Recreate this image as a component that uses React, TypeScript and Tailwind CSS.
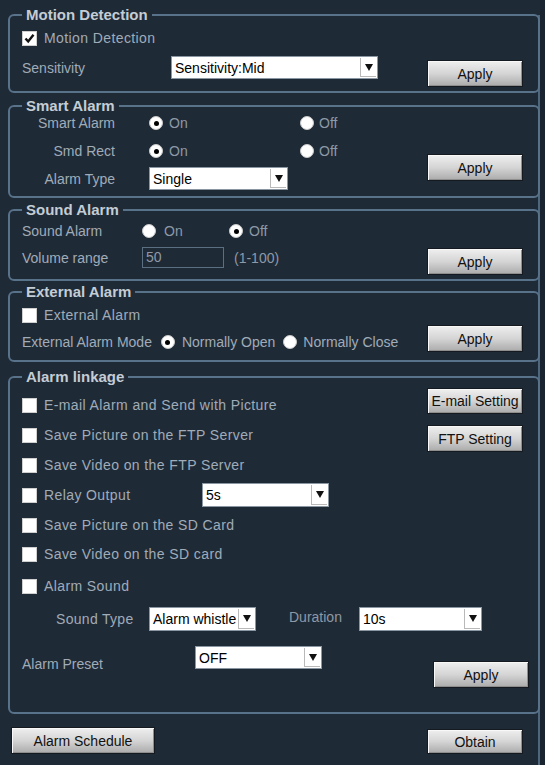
import type { ReactNode } from "react";

const label = "text-[14px] leading-[16px] text-[#a0acb8] whitespace-nowrap";
const dim = "text-[14px] leading-[16px] text-[#8d99a6] whitespace-nowrap";

function Legend({ children }: { children: ReactNode }) {
  return (
    <legend className="px-[4px] text-[15px] font-bold leading-[18px] text-[#c4ccd4]">
      {children}
    </legend>
  );
}

function Btn({ children, className = "" }: { children: ReactNode; className?: string }) {
  return (
    <button
      className={`flex shrink-0 items-center justify-center whitespace-nowrap border border-[#141a20] bg-linear-to-b from-[#efefef] via-[#d5d5d5] to-[#ababab] text-[14px] leading-[16px] text-[#111] shadow-[inset_1px_1px_0_#f8f8f8,inset_-1px_-1px_0_#8e8e8e] ${className}`}
    >
      {children}
    </button>
  );
}

function Check({ checked = false }: { checked?: boolean }) {
  return (
    <span className="flex h-[15px] w-[15px] shrink-0 items-center justify-center border border-[#cfcfcf] bg-white">
      {checked && (
        <svg width="11" height="11" viewBox="0 0 11 11">
          <path d="M1.5 5.5 L4.2 8.5 L9.5 1.8" fill="none" stroke="#111" strokeWidth="2.4" />
        </svg>
      )}
    </span>
  );
}

function Radio({ on = false }: { on?: boolean }) {
  return (
    <span className="flex h-[14px] w-[14px] shrink-0 items-center justify-center rounded-full border border-[#c9c9c9] bg-white">
      {on && <span className="h-[5px] w-[5px] rounded-full bg-black" />}
    </span>
  );
}

function Sel({ value, className = "" }: { value: string; className?: string }) {
  return (
    <div className={`flex shrink-0 items-stretch overflow-hidden border border-[#8a96a2] bg-white ${className}`}>
      <span className="flex min-w-0 flex-1 items-center overflow-hidden whitespace-nowrap pl-[3px] text-[14px] leading-[16px] text-black">
        {value}
      </span>
      <span className="my-[1px] mr-[1px] flex w-[16px] shrink-0 items-center justify-center border-b border-l border-[#b9b9b9] bg-white">
        <svg width="8" height="7" viewBox="0 0 8 7">
          <path d="M0 0 H8 L4 7 Z" fill="#111" />
        </svg>
      </span>
    </div>
  );
}

function CheckRow({ text, className = "", checked = false }: { text: string; className?: string; checked?: boolean }) {
  return (
    <div className={`flex h-[20px] items-center gap-[7px] ${className}`}>
      <Check checked={checked} />
      <span className={`${label} tracking-[0.4px]`}>{text}</span>
    </div>
  );
}

const fs = "ml-[8px] w-[532px] min-w-0 rounded-[6px] border-2 border-[#58728a] pl-[12px] pr-0 pb-0";

export default function App() {
  return (
    <div className="relative flex h-[765px] w-[545px] overflow-hidden bg-[#1f2a37] font-['Liberation_Sans',Arial,sans-serif]">
      <div className="absolute bottom-0 right-[5px] top-[15px] w-[2px] bg-[#4f677c]" />
      <div className="absolute bottom-0 right-0 top-0 w-[5px] bg-[#1a2430]" />
      <div className="relative flex w-[540px] flex-col">
        {/* Motion Detection */}
        <fieldset className={`${fs} mt-[6px] h-[87px]`}>
          <Legend>Motion Detection</Legend>
          <div className="flex">
            <div className="min-w-0 flex-1">
              <CheckRow text="Motion Detection" checked className="mt-[4px]" />
              <div className="mt-[8px] flex h-[23px] items-center">
                <span className={`${label} w-[149px]`}>Sensitivity</span>
                <Sel value="Sensitivity:Mid" className="h-[23px] w-[207px]" />
              </div>
            </div>
            <Btn className="mr-[15px] mt-[36px] h-[27px] w-[96px]">Apply</Btn>
          </div>
        </fieldset>

        {/* Smart Alarm */}
        <fieldset className={`${fs} mt-[4px] h-[101px]`}>
          <Legend>Smart Alarm</Legend>
          <div className="flex">
            <div className="min-w-0 flex-1">
              <div className="flex h-[16px] items-center">
                <span className={`${label} w-[93px] text-right`}>Smart Alarm</span>
                <div className="ml-[34px] flex w-[151px] items-center gap-[6px]">
                  <Radio on />
                  <span className={dim}>On</span>
                </div>
                <div className="flex items-center gap-[5px]">
                  <Radio />
                  <span className={dim}>Off</span>
                </div>
              </div>
              <div className="mt-[10px] flex h-[20px] items-center">
                <span className={`${label} w-[93px] text-right`}>Smd Rect</span>
                <div className="ml-[34px] flex w-[151px] items-center gap-[6px]">
                  <Radio on />
                  <span className={dim}>On</span>
                </div>
                <div className="flex items-center gap-[5px]">
                  <Radio />
                  <span className={dim}>Off</span>
                </div>
              </div>
              <div className="mt-[6px] flex h-[23px] items-center">
                <span className={`${label} w-[93px] text-right`}>Alarm Type</span>
                <Sel value="Single" className="ml-[34px] h-[23px] w-[139px]" />
              </div>
            </div>
            <Btn className="mr-[15px] mt-[39px] h-[27px] w-[96px]">Apply</Btn>
          </div>
        </fieldset>

        {/* Sound Alarm */}
        <fieldset className={`${fs} mt-[3px] h-[80px]`}>
          <Legend>Sound Alarm</Legend>
          <div className="flex">
            <div className="min-w-0 flex-1">
              <div className="mt-[2px] flex h-[20px] items-center">
                <span className={`${label} w-[120px]`}>Sound Alarm</span>
                <div className="flex w-[87px] items-center gap-[8px]">
                  <Radio />
                  <span className={dim}>On</span>
                </div>
                <div className="flex items-center gap-[6px]">
                  <Radio on />
                  <span className={dim}>Off</span>
                </div>
              </div>
              <div className="mt-[6px] flex h-[21px] items-center">
                <span className={`${label} w-[120px]`}>Volume range</span>
                <div className="flex h-[21px] w-[82px] items-center border border-[#5b6f82] pl-[3px] text-[14px] text-[#8d99a6]">
                  50
                </div>
                <span className={`${dim} ml-[10px]`}>(1-100)</span>
              </div>
            </div>
            <Btn className="mr-[15px] mt-[29px] h-[27px] w-[96px]">Apply</Btn>
          </div>
        </fieldset>

        {/* External Alarm */}
        <fieldset className={`${fs} mt-[2px] h-[79px]`}>
          <Legend>External Alarm</Legend>
          <div className="flex">
            <div className="min-w-0 flex-1">
              <CheckRow text="External Alarm" className="mt-[4px]" />
              <div className="mt-[7px] flex h-[20px] items-center">
                <span className={label}>External Alarm Mode</span>
                <span className="ml-[9px]">
                  <Radio on />
                </span>
                <span className={`${label} ml-[7px]`}>Normally Open</span>
                <span className="ml-[8px]">
                  <Radio />
                </span>
                <span className={`${label} ml-[6px]`}>Normally Close</span>
              </div>
            </div>
            <Btn className="mr-[15px] mt-[24px] h-[27px] w-[96px]">Apply</Btn>
          </div>
        </fieldset>

        {/* Alarm linkage */}
        <fieldset className={`${fs} mt-[6px] h-[346px]`}>
          <Legend>Alarm linkage</Legend>
          <div className="flex">
            <div className="min-w-0 flex-1">
              <CheckRow text="E-mail Alarm and Send with Picture" className="mt-[9px]" />
              <CheckRow text="Save Picture on the FTP Server" className="mt-[10px]" />
              <CheckRow text="Save Video on the FTP Server" className="mt-[10px]" />
              <div className="mt-[8px] flex h-[24px] items-center gap-[7px]">
                <Check />
                <span className={`${label} w-[151px] tracking-[0.4px]`}>Relay Output</span>
                <Sel value="5s" className="h-[24px] w-[127px]" />
              </div>
              <CheckRow text="Save Picture on the SD Card" className="mt-[8px]" />
              <CheckRow text="Save Video on the SD card" className="mt-[9px]" />
              <CheckRow text="Alarm Sound" className="mt-[12px]" />
            </div>
            <div className="mr-[15px] flex flex-col">
              <Btn className="mt-[2px] h-[26px] w-[96px]">E-mail Setting</Btn>
              <Btn className="mt-[11px] h-[27px] w-[96px]">FTP Setting</Btn>
            </div>
          </div>
          <div className="mt-[11px] flex h-[24px] items-center pl-[34px]">
            <span className={`${label} w-[93px] tracking-[0.3px]`}>Sound Type</span>
            <Sel value="Alarm whistle" className="h-[24px] w-[107px]" />
            <span className={`${dim} mb-[5px] ml-[33px] w-[70px]`}>Duration</span>
            <Sel value="10s" className="h-[24px] w-[123px]" />
          </div>
          <div className="mt-[15px] flex items-start">
            <span className={`${label} mt-[10px] w-[173px]`}>Alarm Preset</span>
            <Sel value="OFF" className="h-[23px] w-[127px]" />
            <Btn className="ml-auto mr-[9px] mt-[15px] h-[27px] w-[96px]">Apply</Btn>
          </div>
        </fieldset>

        <div className="mt-[13px] flex items-start">
          <Btn className="ml-[11px] h-[27px] w-[144px]">Alarm Schedule</Btn>
          <Btn className="ml-auto mr-[17px] mt-[2px] h-[25px] w-[96px]">Obtain</Btn>
        </div>
      </div>
    </div>
  );
}
